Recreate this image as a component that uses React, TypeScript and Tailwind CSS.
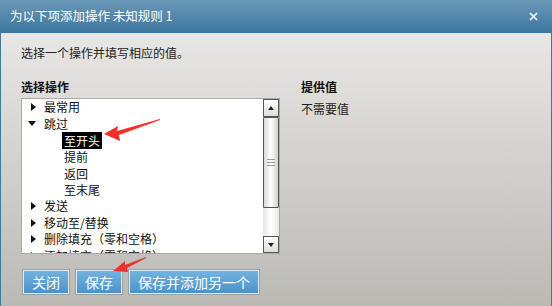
import React from "react";

const font = { fontFamily: '"Noto Sans CJK SC", "Liberation Sans", sans-serif' };

type Row = { label: string; level: 0 | 1; arrow?: "right" | "down"; selected?: boolean };

const rows: Row[] = [
  { label: "最常用", level: 0, arrow: "right" },
  { label: "跳过", level: 0, arrow: "down" },
  { label: "至开头", level: 1, selected: true },
  { label: "提前", level: 1 },
  { label: "返回", level: 1 },
  { label: "至末尾", level: 1 },
  { label: "发送", level: 0, arrow: "right" },
  { label: "移动至/替换", level: 0, arrow: "right" },
  { label: "删除填充（零和空格）", level: 0, arrow: "right" },
  { label: "添加填充（零和空格）", level: 0, arrow: "right" },
];

function Caret({ dir }: { dir: "right" | "down" }) {
  if (dir === "right")
    return (
      <svg width="5" height="8" viewBox="0 0 5 8" className="block">
        <polygon points="0,0 5,4 0,8" fill="#111" />
      </svg>
    );
  return (
    <svg width="8" height="5" viewBox="0 0 8 5" className="block">
      <polygon points="0,0 8,0 4,5" fill="#111" />
    </svg>
  );
}

function Button({ children, w }: { children: React.ReactNode; w: string }) {
  return (
    <button
      className={`${w} h-[24px] border border-[#dfe8ee] shadow-[0_0_0_1px_#9aa3a8] bg-gradient-to-b from-[#72b2e0] to-[#4c93c9] text-white text-[14px] leading-none flex items-center justify-center`}
      style={font}
    >
      {children}
    </button>
  );
}

export default function App() {
  return (
    <div className="relative w-[552px] h-[306px] overflow-hidden" style={font}>
      {/* title bar */}
      <div className="h-[33px] bg-gradient-to-b from-[#6b98b6] to-[#3c76a0] flex items-center justify-between pl-[10px] pr-[14px]">
        <span className="text-white text-[12.5px]">为以下项添加操作 未知规则 1</span>
        <svg width="9" height="9" viewBox="0 0 9 9">
          <path d="M1 1 L8 8 M8 1 L1 8" stroke="#fff" strokeWidth="1.6" />
        </svg>
      </div>

      {/* body */}
      <div className="h-[273px] border-x border-[#3f79a2] bg-gradient-to-b from-[#e8e7e5] to-[#bab9b4] pl-[20px] pt-[11px]">
        <p className="text-[12px] text-[#222] leading-[18px]">选择一个操作并填写相应的值。</p>

        <div className="flex mt-[17px]">
          <div className="w-[259px]">
            <div className="text-[12px] font-bold text-[#111] leading-[16px] h-[19px]">选择操作</div>
            <div className="flex h-[156px] border border-[#a9a9a9] bg-white">
              <div className="flex-1 overflow-hidden">
                {rows.map((r, i) => (
                  <div key={i} className="h-[16.5px] flex items-center text-[12px] text-[#111] whitespace-nowrap">
                    {r.level === 0 ? (
                      <>
                        <span className="w-[22px] flex justify-end pr-[8px] shrink-0">
                          {r.arrow && <Caret dir={r.arrow} />}
                        </span>
                        <span>{r.label}</span>
                      </>
                    ) : (
                      <span
                        className={`ml-[40px] px-[2px] leading-[17px] ${
                          r.selected ? "bg-black text-white" : ""
                        }`}
                      >
                        {r.label}
                      </span>
                    )}
                  </div>
                ))}
              </div>
              {/* scrollbar */}
              <div className="w-[16px] flex flex-col bg-gradient-to-r from-[#e6e6e6] via-white to-[#e6e6e6]">
                <div className="h-[18px] border border-[#555] bg-gradient-to-b from-white to-[#dcdcdc] flex items-center justify-center">
                  <svg width="6" height="4" viewBox="0 0 6 4">
                    <polygon points="0,4 6,4 3,0" fill="#222" />
                  </svg>
                </div>
                <div className="h-[91px] border border-[#555] rounded-[1px] bg-gradient-to-r from-[#d9d9d9] via-white to-[#d0d0d0] flex flex-col items-center justify-center gap-[2px]">
                  <div className="w-[8px] h-px bg-[#999]" />
                  <div className="w-[8px] h-px bg-[#999]" />
                  <div className="w-[8px] h-px bg-[#999]" />
                </div>
                <div className="flex-1" />
                <div className="h-[17px] border border-[#555] bg-gradient-to-b from-white to-[#dcdcdc] flex items-center justify-center">
                  <svg width="6" height="4" viewBox="0 0 6 4">
                    <polygon points="0,0 6,0 3,4" fill="#222" />
                  </svg>
                </div>
              </div>
            </div>
          </div>
          <div className="ml-[21px]">
            <div className="text-[12px] font-bold text-[#111] leading-[16px] h-[19px]">提供值</div>
            <div className="text-[12px] text-[#222] leading-[16px] mt-[3px]">不需要值</div>
          </div>
        </div>

        <div className="flex gap-[7px] mt-[16px] ml-[2px]">
          <Button w="w-[46px]">关闭</Button>
          <Button w="w-[46px]">保存</Button>
          <Button w="w-[130px]">保存并添加另一个</Button>
        </div>
      </div>

      {/* red annotation arrows */}
      <svg className="absolute left-0 top-0 pointer-events-none" width="552" height="306">
        <polygon points="160,119 117,131 118,126 104,134 120,141 119,135 160,120" fill="#f0302a" />
        <polygon points="146,257 125,265 125,261 113,271 128,272 127,268 146,258" fill="#f0302a" />
      </svg>
    </div>
  );
}
